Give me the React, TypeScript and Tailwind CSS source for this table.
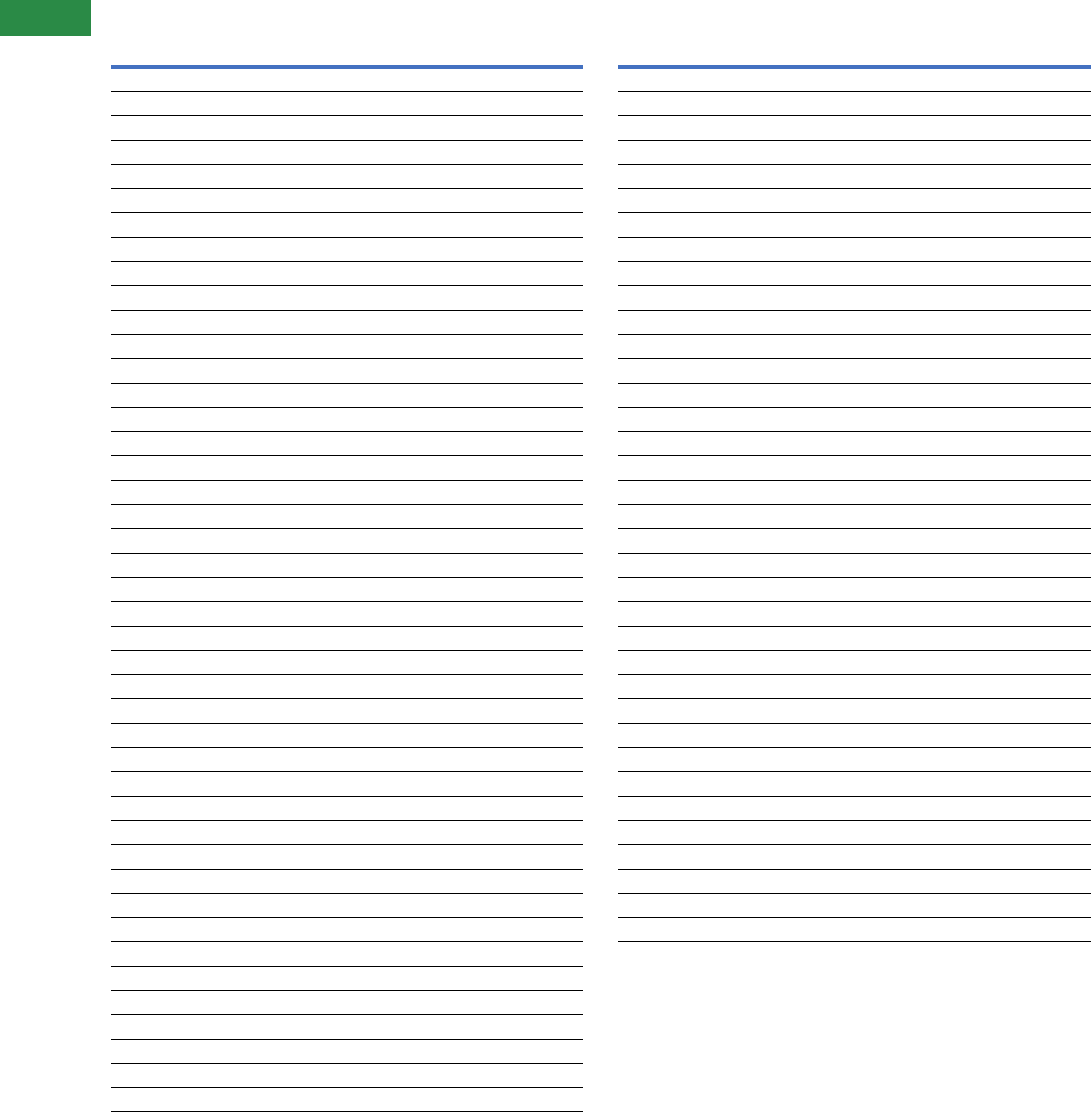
export default function App() {
    const leftRows = Array.from({ length: 43 })
    const rightRows = Array.from({ length: 36 })

    return (
        <div className="w-[1091px] h-[1113px] overflow-hidden bg-white">
            <div className="w-[91px] h-[36px] bg-[#2a8a46]" />
            <div className="flex mt-[29px] pl-[111px] gap-[35px]">
                <div className="w-[472px] shrink-0">
                    <div className="h-[4px] bg-[#4471c1]" />
                    {leftRows.map((_, i) => (
                        <div
                            key={i}
                            className={(i === 0 ? 'h-[23px]' : 'h-[24.31px]') + ' border-b border-black'}
                        />
                    ))}
                </div>
                <div className="w-[473px] shrink-0">
                    <div className="h-[4px] bg-[#4471c1]" />
                    {rightRows.map((_, i) => (
                        <div
                            key={i}
                            className={(i === 0 ? 'h-[23px]' : 'h-[24.31px]') + ' border-b border-black'}
                        />
                    ))}
                </div>
            </div>
        </div>
    )
}
